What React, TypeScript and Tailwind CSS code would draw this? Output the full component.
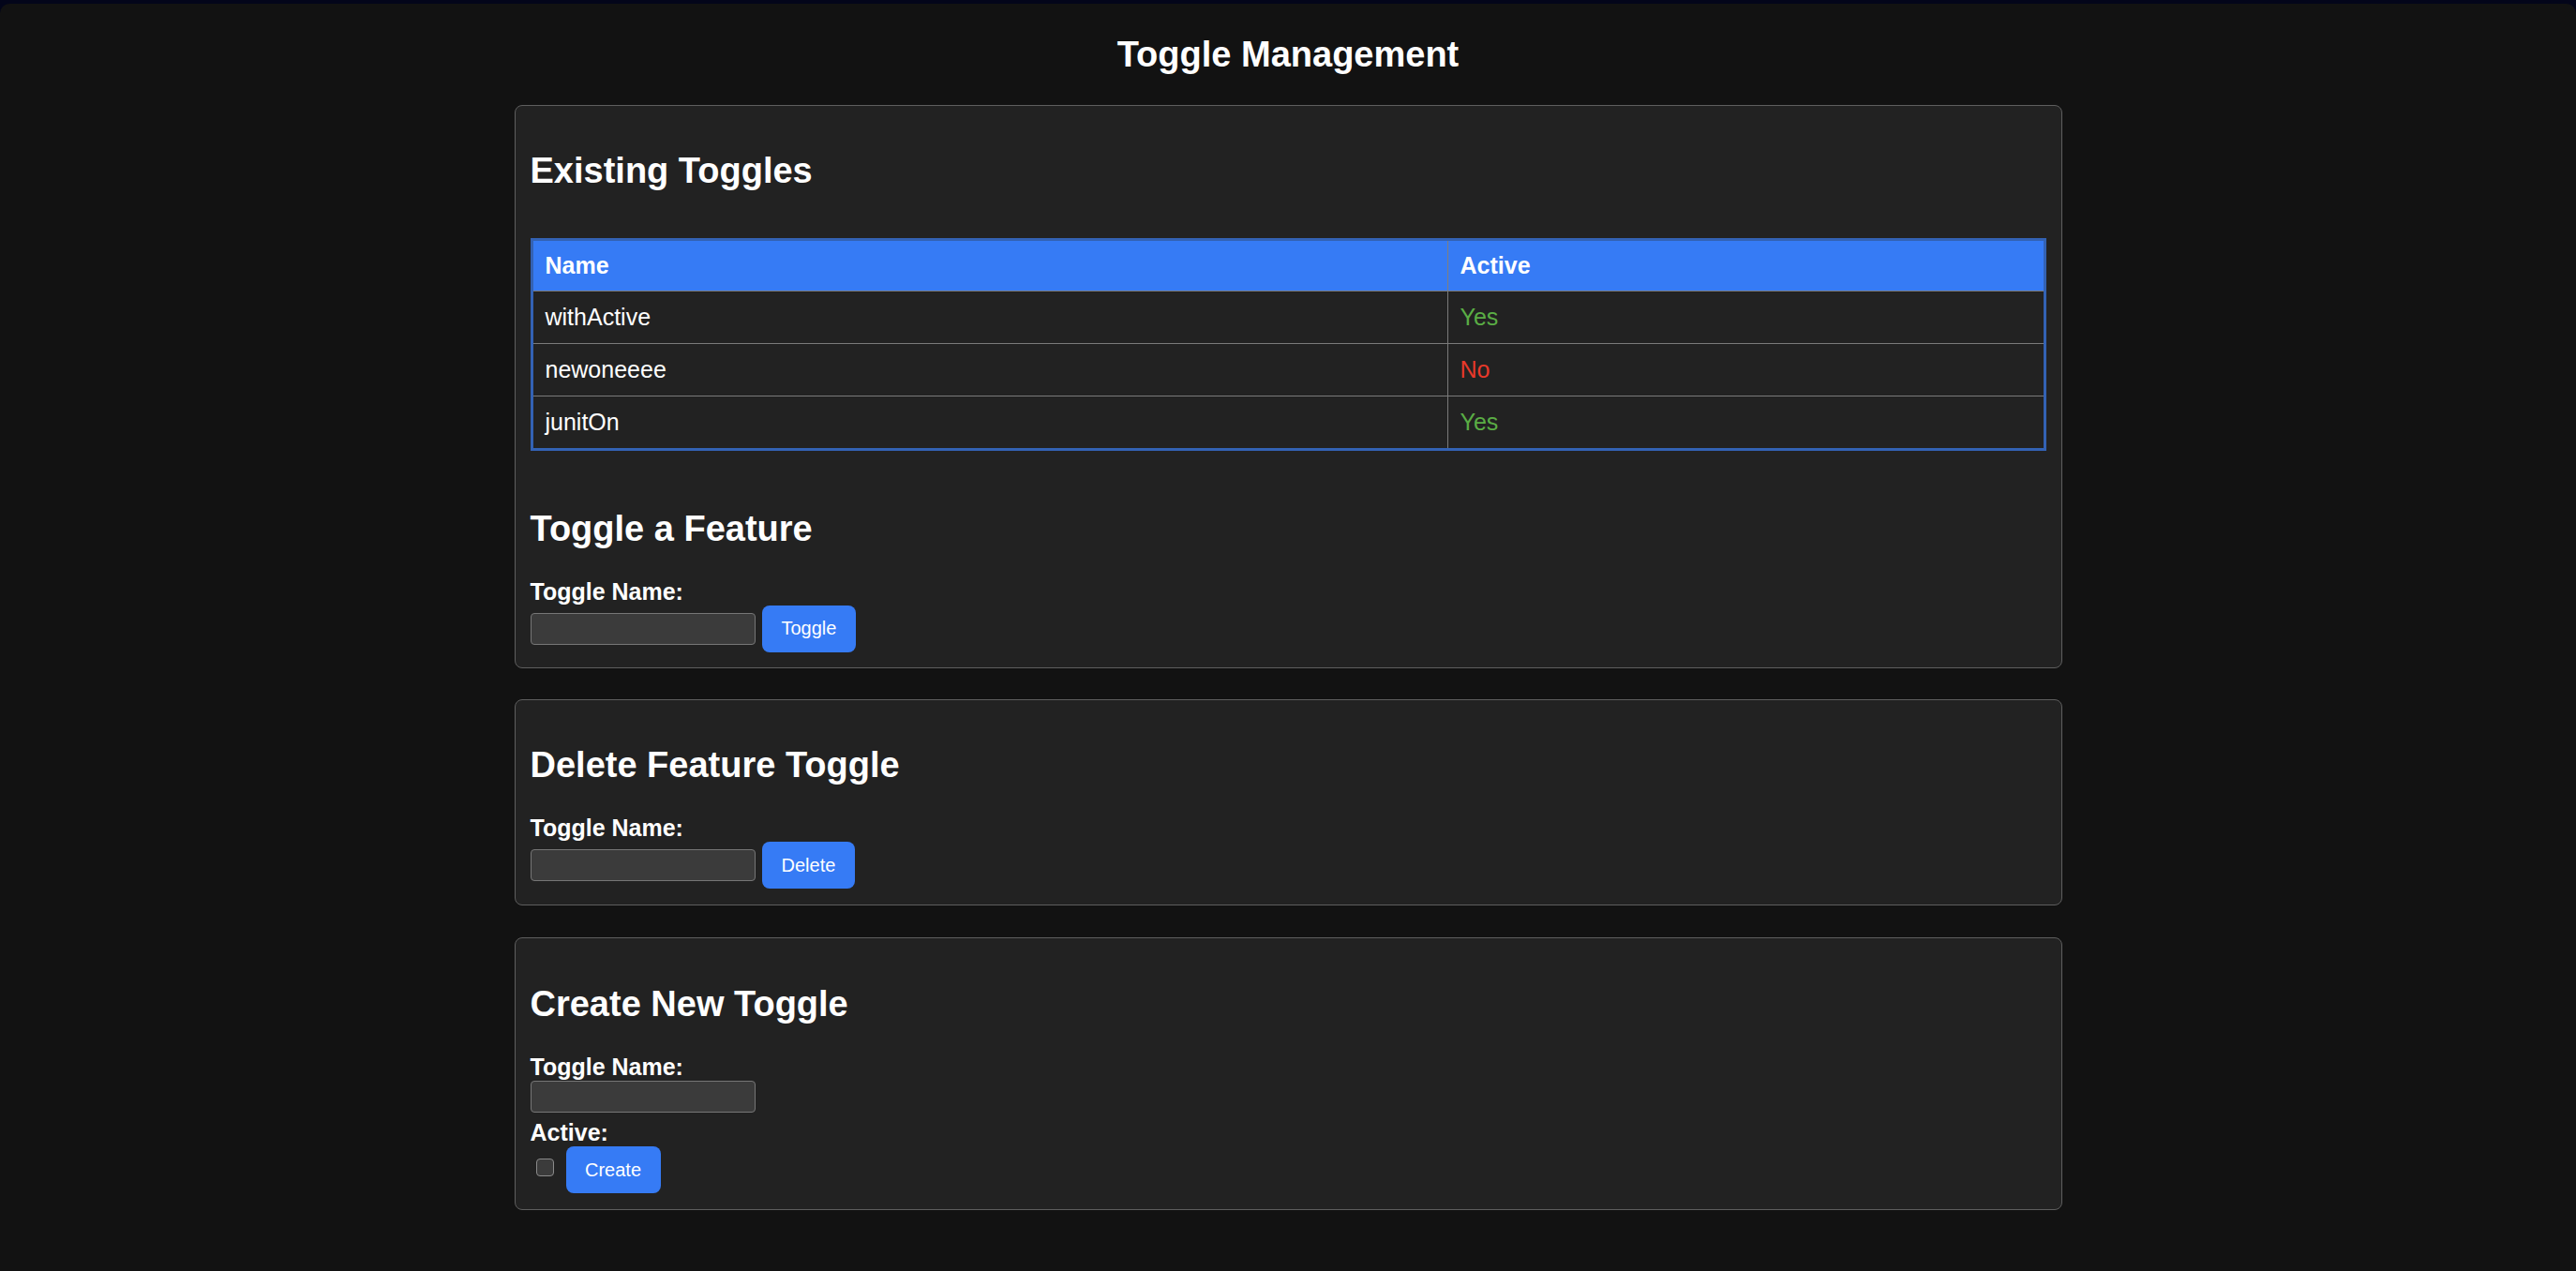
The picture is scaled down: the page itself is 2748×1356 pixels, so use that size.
import React from "react";

const rows = [
  { name: "withActive", active: true },
  { name: "newoneeee", active: false },
  { name: "junitOn", active: true },
];

function Label({ children, className = "" }: { children: React.ReactNode; className?: string }) {
  return <div className={`text-[25px] leading-[29px] font-bold text-white ${className}`}>{children}</div>;
}

function TextInput() {
  return (
    <input
      type="text"
      className="w-[240px] h-[34px] bg-[#3b3b3b] border border-[#767676] rounded-[4px] outline-none text-white text-[20px] px-[4px]"
    />
  );
}

function Btn({ children }: { children: React.ReactNode }) {
  return (
    <button className="h-[50px] px-[20.5px] bg-[#367bf5] text-white text-[20px] leading-[23px] rounded-[8px]">
      {children}
    </button>
  );
}

function H2({ children, className = "" }: { children: React.ReactNode; className?: string }) {
  return <h2 className={`text-[38px] leading-[44px] font-bold text-white ${className}`}>{children}</h2>;
}

function Card({ children, className = "" }: { children: React.ReactNode; className?: string }) {
  return (
    <div className={`w-[1651px] bg-[#222222] border border-[#5e5e5e] rounded-[8px] px-[16px] pt-[16px] flex flex-col ${className}`}>
      {children}
    </div>
  );
}

export default function App() {
  return (
    <div
      className="min-h-screen bg-[#03051a] pt-[4px]"
      style={{ fontFamily: '"Liberation Sans", Arial, Helvetica, sans-serif' }}
    >
      <div className="min-h-[1352px] bg-[#121212] rounded-t-[10px] flex flex-col items-center pb-[60px]">
        <h1 className="mt-[31.8px] mb-[32.2px] text-[38px] leading-[44px] font-bold text-white">Toggle Management</h1>

        <Card className="pb-[16px]">
          <H2 className="mt-[31.5px]">Existing Toggles</H2>
          <div className="mt-[49.5px] border-[3px] border-[#3362b4] flex flex-col">
            <div className="flex h-[53px] bg-[#367bf5] text-white text-[25px] font-bold">
              <div className="w-[975px] flex items-center px-[13px]">Name</div>
              <div className="flex-1 flex items-center px-[13px] border-l border-[#7f7f7f]">Active</div>
            </div>
            {rows.map((r) => (
              <div key={r.name} className="flex h-[56px] border-t border-[#7a7a7a] text-[25px]">
                <div className="w-[975px] flex items-center px-[13px] text-white">{r.name}</div>
                <div
                  className={`flex-1 flex items-center px-[13px] border-l border-[#7a7a7a] ${
                    r.active ? "text-[#5aad45]" : "text-[#e8392a]"
                  }`}
                >
                  {r.active ? "Yes" : "No"}
                </div>
              </div>
            ))}
          </div>

          <H2 className="mt-[60.6px]">Toggle a Feature</H2>
          <Label className="mt-[31px]">Toggle Name:</Label>
          <div className="flex items-center h-[50px]">
            <TextInput />
            <div className="ml-[7.5px]">
              <Btn>Toggle</Btn>
            </div>
          </div>
        </Card>

        <Card className="mt-[33px] pb-[17px]">
          <H2 className="mt-[31.5px]">Delete Feature Toggle</H2>
          <Label className="mt-[31px]">Toggle Name:</Label>
          <div className="flex items-center h-[50px]">
            <TextInput />
            <div className="ml-[7.5px]">
              <Btn>Delete</Btn>
            </div>
          </div>
        </Card>

        <Card className="mt-[34px] pb-[17px]">
          <H2 className="mt-[31.5px]">Create New Toggle</H2>
          <Label className="mt-[31px]">Toggle Name:</Label>
          <div className="flex">
            <TextInput />
          </div>
          <Label className="mt-[7.7px]">Active:</Label>
          <div className="flex items-center h-[50px]">
            <input
              type="checkbox"
              className="appearance-none ml-[6px] mb-[6px] w-[19px] h-[19px] bg-[#3b3b3b] border border-[#8a8a8a] rounded-[4px]"
            />
            <div className="ml-[13px]">
              <Btn>Create</Btn>
            </div>
          </div>
        </Card>
      </div>
    </div>
  );
}
